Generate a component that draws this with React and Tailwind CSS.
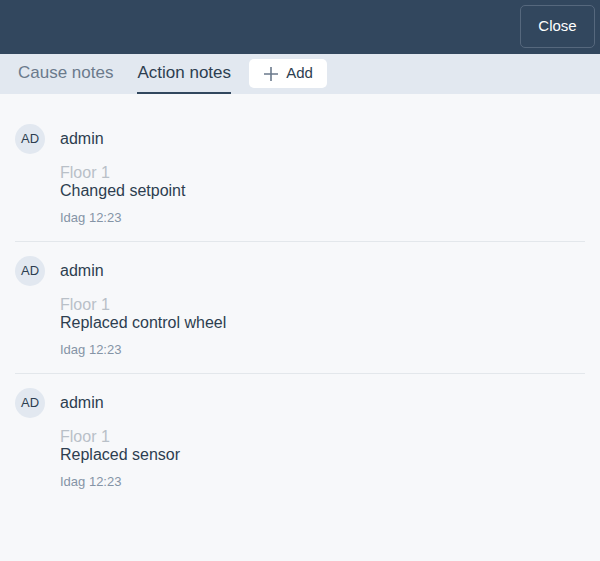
import React, { useState } from 'react';

const notes = [
  { user: 'admin', initials: 'AD', location: 'Floor 1', text: 'Changed setpoint', time: 'Idag 12:23' },
  { user: 'admin', initials: 'AD', location: 'Floor 1', text: 'Replaced control wheel', time: 'Idag 12:23' },
  { user: 'admin', initials: 'AD', location: 'Floor 1', text: 'Replaced sensor', time: 'Idag 12:23' },
];

const PlusIcon = () => (
  <svg width="16" height="16" viewBox="0 0 16 16" fill="none" stroke="#6b7a8c" strokeWidth="1.6">
    <path d="M8 1v14M1 8h14" />
  </svg>
);

const App = () => {
  const [activeTab, setActiveTab] = useState('action');

  return (
    <div className="w-[600px] h-[561px] flex flex-col bg-[#f7f8fa] font-['Liberation_Sans',Arial,sans-serif]">
      <div className="h-[54px] bg-[#32475e] flex justify-end items-start pt-[5px] pr-[5px]">
        <button className="w-[75px] h-[43px] rounded-[5px] border border-[#56687d] text-white text-[15px]">
          Close
        </button>
      </div>

      <div className="h-[40px] bg-[#e2e8f0] flex items-stretch pl-[18px]">
        <button
          onClick={() => setActiveTab('cause')}
          className={`text-[17px] border-b-2 ${activeTab === 'cause' ? 'text-[#2d3e50] border-[#32475e]' : 'text-[#6b7a8c] border-transparent'}`}
        >
          Cause notes
        </button>
        <button
          onClick={() => setActiveTab('action')}
          className={`ml-[24px] text-[17px] border-b-2 ${activeTab === 'action' ? 'text-[#2d3e50] border-[#32475e]' : 'text-[#6b7a8c] border-transparent'}`}
        >
          Action notes
        </button>
        <div className="ml-[18px] flex items-start pt-[5px]">
          <button className="w-[78px] h-[29px] bg-white rounded-[5px] flex items-center justify-center gap-[7px] text-[15px] text-[#2d3e50]">
            <PlusIcon />
            Add
          </button>
        </div>
      </div>

      <div className="flex-1 px-[15px] pt-[16px]">
        {notes.map((n, i) => (
          <div
            key={i}
            className={`pt-[14px] pb-[15px] ${i < notes.length - 1 ? 'border-b border-[#e3e7eb]' : ''}`}
          >
            <div className="flex items-center gap-[15px]">
              <div className="w-[30px] h-[30px] rounded-full bg-[#e2e8f0] flex items-center justify-center text-[13px] text-[#2d3e50]">
                {n.initials}
              </div>
              <span className="text-[16px] text-[#2d3e50]">{n.user}</span>
            </div>
            <div className="pl-[45px]">
              <div className="mt-[10px] text-[16px] leading-[18px] text-[#b9c0c8]">{n.location}</div>
              <div className="text-[16px] leading-[18px] text-[#2d3e50]">{n.text}</div>
              <div className="mt-[10px] text-[13px] leading-[16px] text-[#8594a6]">{n.time}</div>
            </div>
          </div>
        ))}
      </div>
    </div>
  );
};

export default App;
